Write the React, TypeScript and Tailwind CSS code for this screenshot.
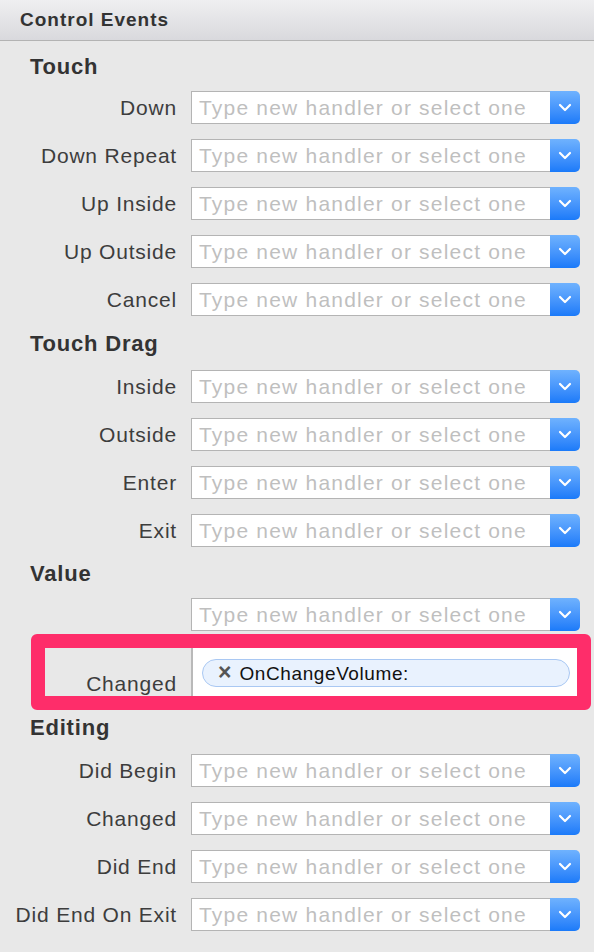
import React from "react";

const sections: { title: string; pt: string; h: string; rows: string[] }[] = [
  { title: "Touch", pt: "pt-[14px]", h: "h-[42px]", rows: ["Down", "Down Repeat", "Up Inside", "Up Outside", "Cancel"] },
  { title: "Touch Drag", pt: "pt-[9px]", h: "h-[39px]", rows: ["Inside", "Outside", "Enter", "Exit"] },
];

function Chevron() {
  return (
    <svg width="14" height="9" viewBox="0 0 14 9" fill="none">
      <path d="M2 2l5 5 5-5" stroke="white" strokeWidth="2.2" strokeLinecap="round" strokeLinejoin="round" />
    </svg>
  );
}

function HandlerInput() {
  return (
    <div className="flex h-[33px] w-[389px]">
      <div className="flex-1 flex items-center bg-white border border-[#b4b4b4] border-r-0 pl-[7px] text-[21px] leading-none tracking-[1.2px] text-[#bfbfbf] whitespace-nowrap overflow-hidden">
        Type new handler or select one
      </div>
      <div className="w-[30px] flex items-center justify-center rounded-r-[5px] bg-gradient-to-b from-[#6fb2fe] to-[#1a7af9]">
        <Chevron />
      </div>
    </div>
  );
}

function Row({ label }: { label: string }) {
  return (
    <div className="h-[48px] flex items-center">
      <div className="w-[178px] pr-[1px] text-right text-[21px] leading-none tracking-[0.8px] text-[#3d3d3d] whitespace-nowrap">
        {label}
      </div>
      <div className="ml-[13px]">
        <HandlerInput />
      </div>
    </div>
  );
}

function SectionHeader({ title, pt, h }: { title: string; pt: string; h: string }) {
  return (
    <div className={`${h} ${pt} pl-[30px]`}>
      <div className="text-[22px] leading-[24px] font-bold tracking-[0.8px] text-[#333333]">{title}</div>
    </div>
  );
}

export default function App() {
  return (
    <div
      className="w-[594px] h-[952px] bg-[#e8e8e8] overflow-hidden"
      style={{ fontFamily: '"Liberation Sans", Arial, sans-serif' }}
    >
      <div className="h-[41px] border-b border-[#b3b3b3] bg-gradient-to-b from-[#efeff1] to-[#d9d9dd] flex items-center pl-[20px]">
        <span className="text-[19px] font-bold tracking-[1px] text-[#333333]">Control Events</span>
      </div>

      {sections.map((s) => (
        <div key={s.title}>
          <SectionHeader title={s.title} pt={s.pt} h={s.h} />
          {s.rows.map((r) => (
            <Row key={r} label={r} />
          ))}
        </div>
      ))}

      <SectionHeader title="Value" pt="pt-[8px]" h="h-[36px]" />
      <Row label="" />

      {/* Changed row, highlighted */}
      <div className="relative h-[69px]">
        <div className="flex h-full pt-[10px]">
          <div className="w-[178px] pr-[1px] flex items-end justify-end pb-[13px] text-[21px] leading-none tracking-[0.8px] text-[#3d3d3d]">
            Changed
          </div>
          <div className="ml-[13px] w-[389px] h-[55px] bg-white border-l-2 border-[#b9b9b9] pl-[9px] pt-[11px]">
            <div className="h-[28px] w-[368px] rounded-full bg-[#e9f2fe] border border-[#a9c8f3] flex items-center pl-[15px] gap-[8px]">
              <span className="text-[23px] font-bold leading-none text-[#555555] -mt-[2px]">×</span>
              <span className="text-[19px] leading-none tracking-[0.6px] text-[#111111]">OnChangeVolume:</span>
            </div>
          </div>
        </div>
        <div className="absolute left-[31px] right-[3px] top-[-4px] bottom-[-3px] border-[14px] border-[#fe2d6a] rounded-[6px]" />
      </div>

      <SectionHeader title="Editing" pt="pt-[9px]" h="h-[39px]" />
      {["Did Begin", "Changed", "Did End", "Did End On Exit"].map((r) => (
        <Row key={r} label={r} />
      ))}
    </div>
  );
}
